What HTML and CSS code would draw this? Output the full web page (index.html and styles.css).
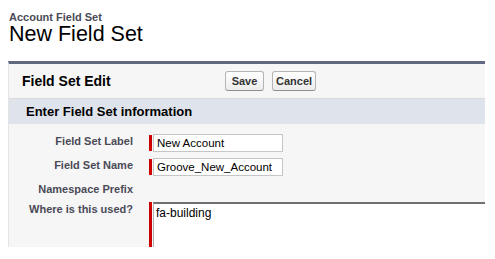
FILE: index.html
```html
<!DOCTYPE html>
<html>
<head>
<meta charset="utf-8">
<link rel="stylesheet" href="styles.css">
</head>
<body>
<div class="page-head">
  <div class="crumb">Account Field Set</div>
  <h1 class="page-title">New Field Set</h1>
</div>
<div class="panel">
  <div class="panel-head">
    <h2 class="panel-title">Field Set Edit</h2>
    <div class="btns">
      <button class="btn btn-save">Save</button>
      <button class="btn">Cancel</button>
    </div>
  </div>
  <div class="subhead">Enter Field Set information</div>
  <div class="form">
    <div class="row">
      <div class="label">Field Set Label</div>
      <div class="data"><div class="req"><span class="bar"></span><input class="inp" type="text" value="New Account"></div></div>
    </div>
    <div class="row">
      <div class="label">Field Set Name</div>
      <div class="data"><div class="req"><span class="bar"></span><input class="inp" type="text" value="Groove_New_Account"></div></div>
    </div>
    <div class="row row-empty">
      <div class="label">Namespace Prefix</div>
      <div class="data"></div>
    </div>
    <div class="row">
      <div class="label">Where is this used?</div>
      <div class="data"><div class="req req-area"><span class="bar"></span><textarea class="area">fa-building</textarea></div></div>
    </div>
  </div>
</div>
</body>
</html>
```

FILE: styles.css
```css
* { box-sizing: border-box; }
html, body { margin: 0; padding: 0; background: #fff; }
body { font-family: "Liberation Sans", Arial, sans-serif; color: #000; }

.page-head { padding: 11px 0 0 9px; height: 61px; }
.crumb { font-size: 11px; line-height: 12px; font-weight: bold; color: #4a4a56; }
.page-title { margin: 0; font-size: 21.5px; line-height: 22px; font-weight: normal; color: #000; }

.panel {
  margin-left: 8px;
  width: 477px;
  height: 186px;
  overflow: hidden;
  background: #f6f6f6;
  border-top: 3px solid #5f6a80;
  border-left: 1px solid #e3e3e3;
}
.panel-head {
  display: flex;
  align-items: center;
  height: 35px;
  padding-left: 13px;
  border-bottom: 1px solid #dbdbdb;
}
.panel-title { margin: 0; width: 203px; font-size: 14px; font-weight: bold; color: #000; }
.btns { display: flex; gap: 8px; }
.btn {
  font-family: "Liberation Sans", Arial, sans-serif;
  font-size: 11px;
  font-weight: bold;
  color: #333;
  height: 20px;
  padding: 0 3px;
  min-width: 39px;
  background: linear-gradient(#ffffff, #ececec);
  border: 1px solid #b5b5b5;
  border-bottom-color: #8f8f8f;
  border-radius: 3px;
}
.subhead {
  height: 25px;
  background: #dfe3ec;
  padding-left: 17px;
  font-size: 13px;
  font-weight: bold;
  line-height: 25px;
  color: #000;
}
.form { padding-top: 7px; }
.row { display: flex; }
.label {
  flex: none;
  width: 124px;
  padding: 3px 0 3px 0;
  text-align: right;
  font-size: 11px;
  line-height: 14px;
  font-weight: bold;
  color: #4a4a56;
  white-space: nowrap;
}
.data { margin-left: 16px; padding: 3px 0; flex: none; }
.row-empty .data { height: 20px; }
.req { position: relative; padding-left: 4px; display: flex; }
.bar { position: absolute; left: 0; top: 1px; bottom: 1px; width: 3px; background: #c00; }
.req-area .bar { top: 0; bottom: 0; }
.inp {
  width: 130px;
  height: 18px;
  border: 1px solid #c6c6c6;
  background: #fff;
  padding: 0 3px;
  margin: 0;
  font-family: "Liberation Sans", Arial, sans-serif;
  font-size: 11.5px;
  color: #000;
}
.area {
  width: 400px;
  height: 70px;
  margin: 0;
  padding: 2px;
  border: 1px solid #b0b0b0;
  border-top: 2px solid #707070;
  background: #fff;
  font-family: "Liberation Sans", Arial, sans-serif;
  font-size: 12px;
  color: #000;
  resize: none;
}
```
